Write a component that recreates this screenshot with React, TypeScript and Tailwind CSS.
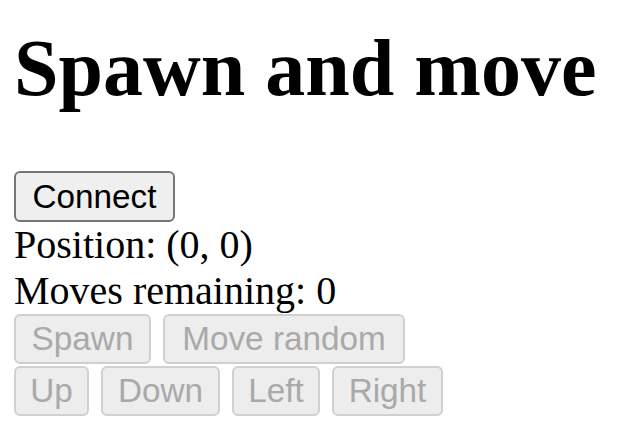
import React from 'react';

const serif = { fontFamily: '"Liberation Serif", "Times New Roman", serif' };

function Btn({ label, width, disabled = false }: { label: string; width: string; disabled?: boolean }) {
  return (
    <button
      disabled={disabled}
      className={
        (disabled
          ? 'h-[50px] border-2 border-[#d0d0d0] bg-[#ededed] text-[#a9a9a9] '
          : 'h-[51px] border-2 border-[#767676] bg-[#efefef] text-black ') +
        'flex items-center justify-center rounded-[6px] text-[33.3px] leading-[38px] font-["Liberation_Sans",Arial,sans-serif] ' +
        width
      }
    >
      {label}
    </button>
  );
}

export default function App() {
  return (
    <div className="w-[628px] h-[436px] bg-white px-[14px] pt-[22px] text-black" style={serif}>
      <h1 className="text-[80px] leading-[92px] font-bold">Spawn and move</h1>

      <div className="mt-[57px] flex">
        <Btn label="Connect" width="w-[161px]" />
      </div>

      <div className="text-[40px] leading-[46px]">Position: (0, 0)</div>
      <div className="text-[40px] leading-[46px]">Moves remaining: 0</div>

      <div className="flex gap-[12px]">
        <Btn label="Spawn" width="w-[137px]" disabled />
        <Btn label="Move random" width="w-[242px]" disabled />
      </div>
      <div className="mt-[2px] flex gap-[12px]">
        <Btn label="Up" width="w-[75px]" disabled />
        <Btn label="Down" width="w-[119px]" disabled />
        <Btn label="Left" width="w-[88px]" disabled />
        <Btn label="Right" width="w-[111px]" disabled />
      </div>
    </div>
  );
}
